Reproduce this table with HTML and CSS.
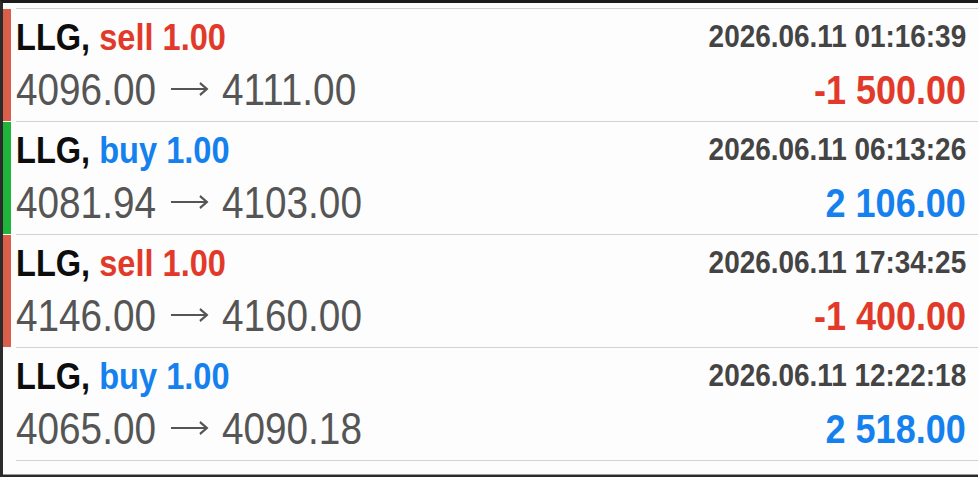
FILE: index.html
```html
<html>
    <head>
        <title>Historial</title>
        <link rel="stylesheet" href="styles.css">
    </head>
    <body>
        <div class="Pantalla">
            <div class="Lista">

                <!-- Operacion 1 -->
                <div class="Fila">
                    <div class="Barra Venta"></div>
                    <div class="Datos">
                        <div class="Izq">
                            <div class="Titulo"><span class="Ajuste">LLG, <span class="Rojo">sell 1.00</span></span></div>
                            <div class="Precio"><span class="Ajuste">4096.00<svg class="Flecha" viewBox="0 0 43 14"><path d="M0 7H41M33 1L41 7L33 13"/></svg>4111.00</span></div>
                        </div>
                        <div class="Der">
                            <div class="Fecha"><span class="Ajuste">2026.06.11 01:16:39</span></div>
                            <div class="Total Rojo"><span class="Ajuste">-1 500.00</span></div>
                        </div>
                    </div>
                </div>

                <!-- Operacion 2 -->
                <div class="Fila">
                    <div class="Barra Compra"></div>
                    <div class="Datos">
                        <div class="Izq">
                            <div class="Titulo"><span class="Ajuste">LLG, <span class="Azul">buy 1.00</span></span></div>
                            <div class="Precio"><span class="Ajuste">4081.94<svg class="Flecha" viewBox="0 0 43 14"><path d="M0 7H41M33 1L41 7L33 13"/></svg>4103.00</span></div>
                        </div>
                        <div class="Der">
                            <div class="Fecha"><span class="Ajuste">2026.06.11 06:13:26</span></div>
                            <div class="Total Azul"><span class="Ajuste">2 106.00</span></div>
                        </div>
                    </div>
                </div>

                <!-- Operacion 3 -->
                <div class="Fila">
                    <div class="Barra Venta"></div>
                    <div class="Datos">
                        <div class="Izq">
                            <div class="Titulo"><span class="Ajuste">LLG, <span class="Rojo">sell 1.00</span></span></div>
                            <div class="Precio"><span class="Ajuste">4146.00<svg class="Flecha" viewBox="0 0 43 14"><path d="M0 7H41M33 1L41 7L33 13"/></svg>4160.00</span></div>
                        </div>
                        <div class="Der">
                            <div class="Fecha"><span class="Ajuste">2026.06.11 17:34:25</span></div>
                            <div class="Total Rojo"><span class="Ajuste">-1 400.00</span></div>
                        </div>
                    </div>
                </div>

                <!-- Operacion 4 -->
                <div class="Fila">
                    <div class="Barra"></div>
                    <div class="Datos">
                        <div class="Izq">
                            <div class="Titulo"><span class="Ajuste">LLG, <span class="Azul">buy 1.00</span></span></div>
                            <div class="Precio"><span class="Ajuste">4065.00<svg class="Flecha" viewBox="0 0 43 14"><path d="M0 7H41M33 1L41 7L33 13"/></svg>4090.18</span></div>
                        </div>
                        <div class="Der">
                            <div class="Fecha"><span class="Ajuste">2026.06.11 12:22:18</span></div>
                            <div class="Total Azul"><span class="Ajuste">2 518.00</span></div>
                        </div>
                    </div>
                </div>

                <div class="Cierre"></div>
            </div>
            <div class="Pie"></div>
        </div>
    </body>
</html>
```

FILE: styles.css
```css
body{
    margin: 0;
    background-color: #f4f4f4;
    font-family: "Liberation Sans", Arial, sans-serif;
}

.Pantalla{
    height: 477px;
    box-sizing: border-box;
    border-top: 3px solid #1b1b1b;
    border-left: 3px solid #2b2b2b;
    padding-top: 5px;
    background-color: #fdfdfd;
    display: flex;
    flex-direction: column;
}

.Lista{
    background-color: #fdfdfd;
}

.Fila{
    display: flex;
    height: 113px;
}

.Barra{
    width: 8px;
    margin-top: 1px;
    margin-right: 5px;
}

.Venta{
    background-color: #d95f4b;
}

.Compra{
    background-color: #1fb43a;
}

.Datos{
    flex: 1;
    display: flex;
    justify-content: space-between;
    border-top: 1px solid #d2d2d2;
    padding-right: 12px;
}

.Ajuste{
    display: inline-block;
    white-space: pre;
    transform: scaleX(0.88);
    transform-origin: left;
}

.Der .Ajuste{
    transform: scaleX(0.9);
    transform-origin: right;
}

.Der{
    text-align: right;
}

.Titulo{
    font-size: 37px;
    font-weight: bold;
    line-height: 57px;
    color: #0d0d0d;
}

.Precio{
    font-size: 44px;
    line-height: 48px;
    color: #555;
}

.Flecha{
    width: 43px;
    height: 14px;
    margin: 0 15px 0 17px;
    vertical-align: 9px;
    fill: none;
    stroke: #555;
    stroke-width: 2.2;
}

.Fecha{
    font-size: 31px;
    font-weight: bold;
    line-height: 56px;
    color: #444;
}

.Total{
    font-size: 40px;
    font-weight: bold;
    line-height: 51px;
}

.Rojo{
    color: #e23a2a;
}

.Azul{
    color: #1581ee;
}

.Cierre{
    margin-left: 13px;
    border-top: 1px solid #d2d2d2;
}

.Pie{
    margin-top: 13px;
    border-top: 1px solid #9a9a9a;
    flex: 1;
    background-color: #2a2a2a;
}
```
